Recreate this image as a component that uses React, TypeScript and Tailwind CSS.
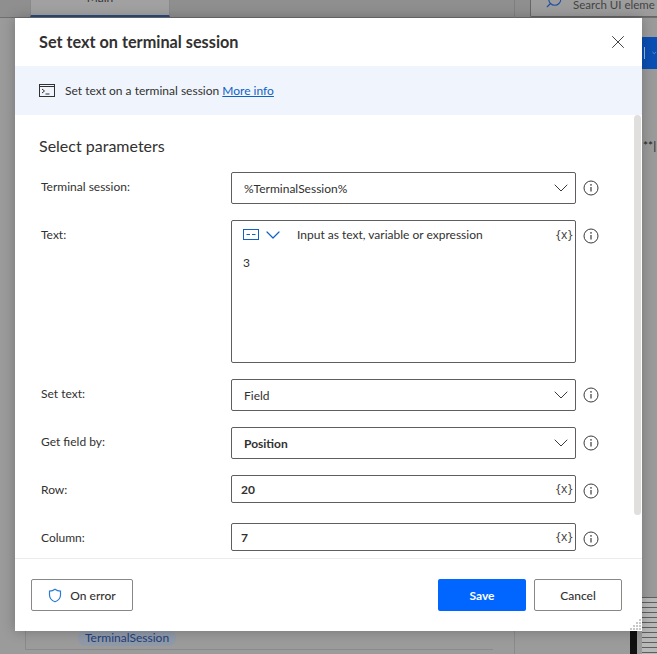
import { ChevronDown, Search, X } from 'lucide-react';

const font = "font-['Lato','Noto_Sans',sans-serif]";

function InfoIcon() {
  return (
    <svg width="16" height="16" viewBox="0 0 16 16" fill="none" className="shrink-0">
      <circle cx="8" cy="8" r="7" stroke="#3b3a39" strokeWidth="1" />
      <path d="M8 7v4.500" stroke="#3b3a39" strokeWidth="1.200" />
      <circle cx="8" cy="4.900" r="0.8" fill="#3b3a39" />
    </svg>
  );
}

function TerminalIcon() {
  return (
    <svg width="17" height="14" viewBox="0 0 17 14" fill="none" className="shrink-0">
      <rect x="0.5" y="0.5" width="15" height="12" stroke="#323130" />
      <path d="M0.5 2.500h15" stroke="#323130" />
      <path d="M3 5l2.500 2-2.500 2M6.500 10h4" stroke="#323130" />
    </svg>
  );
}

function ShieldIcon() {
  return (
    <svg width="14" height="15" viewBox="0 0 14 15" fill="none" className="shrink-0">
      <path d="M7 1.200c1.600 1.200 3.400 1.800 5.500 1.900v3.900c0 3-2 5.500-5.500 6.800C3.500 12.500 1.500 10 1.500 7V3.100C3.600 3 5.400 2.400 7 1.200z" stroke="#2b7cd3" strokeWidth="1.200" />
    </svg>
  );
}

function ModeIcon() {
  return (
    <svg width="16" height="12" viewBox="0 0 16 12" fill="none" className="shrink-0">
      <rect x="0.5" y="0.5" width="15" height="10" stroke="#0f62c4" />
      <path d="M3.500 5.500h3.500M9 5.500h3.500" stroke="#0f62c4" />
    </svg>
  );
}

function ResizeGrip() {
  const dots = [[9, 1], [6, 4], [9, 4], [3, 7], [6, 7], [9, 7], [0, 10], [3, 10], [6, 10], [9, 10]];
  return (
    <svg width="11" height="12" viewBox="0 0 11 12" className="absolute right-[1px] bottom-[1px]">
      {dots.map(([x, y]) => (
        <rect key={`${x}-${y}`} x={x} y={y} width="2" height="2" fill="#c8c8c8" />
      ))}
    </svg>
  );
}

function VarButton() {
  return <span className="font-['Noto_Sans',sans-serif] text-[12px] tracking-[0.5px] text-[#484644]">{'{x}'}</span>;
}

function Field({ children, bold, select }: { children: React.ReactNode; bold?: boolean; select?: boolean }) {
  return (
    <div className={`flex items-center justify-between w-[345px] rounded-[2px] border border-[#605e5c] ${select ? 'h-8 pl-3 pr-0.5' : 'h-7 pl-[9px] pr-0.5'}`}>
      <span className={`pt-px text-[12px] text-[#323130] ${bold ? 'font-bold' : ''}`}>{children}</span>
      {select ? <ChevronDown size={24} strokeWidth={1} color="#3b3a39" /> : <VarButton />}
    </div>
  );
}

function Row({ label, children }: { label: string; children: React.ReactNode }) {
  return (
    <div className="flex items-start min-h-8">
      <div className="w-[192px] pl-[2px] pt-1.5 text-[12px] text-[#323130]">{label}</div>
      {children}
      <div className="ml-[7px] pt-2">
        <InfoIcon />
      </div>
    </div>
  );
}

export default function App() {
  return (
    <div className={`relative w-[657px] h-[654px] overflow-hidden bg-[#9b9b9b] ${font}`}>
      {/* dimmed designer behind the dialog */}
      <div className="flex h-[18px] bg-[#8f8f8f] border-b border-[#6f6f6f]">
        <div className="ml-[30px] w-[140px] flex justify-center items-start bg-[#a1a1a1] border-b-2 border-[#2a4a80] border-x border-x-[#8a8a8a] text-[12px] leading-[12px] text-[#333]">
          <span className="-mt-[8px]">Main</span>
        </div>
        <div className="ml-auto h-[17px] w-[127px] flex items-start gap-[10px] pl-[14px] bg-[#9d9d9d] border-l border-b border-[#666] rounded-bl-[2px] text-[11.5px] leading-[10px] text-[#444] whitespace-nowrap overflow-hidden">
          <Search size={18} strokeWidth={1.500} color="#1f4fa0" className="-scale-x-100 -mt-[9px]" />
          <span>Search UI eleme</span>
        </div>
      </div>
      <div className="absolute left-[514px] top-0 w-px h-[18px] bg-[#7f7f7f]" />
      <div className="absolute right-0 top-[37px] w-[15px] h-[32px] flex items-center gap-[6px] bg-[#0a4fb3]">
        <div className="w-px h-[12px] ml-[2px] bg-[#9db8e0]" />
        <ChevronDown size={12} color="#9db8e0" />
      </div>
      <div className="absolute right-0 top-[137px] w-[14px] text-[12px] whitespace-nowrap overflow-hidden text-[#222]">**|</div>
      <div className="absolute left-[78px] top-[630px] px-[7px] rounded-full bg-[#8f99a8] text-[12px] leading-[16px] text-[#1f3f78]">TerminalSession</div>
      <div className="absolute left-[25px] top-[631px] w-[468px] h-[19px] border-l border-b border-[#8a8a8a]" />
      <div className="absolute left-[514px] top-[631px] w-px h-[23px] bg-[#8a8a8a]" />
      <div className="absolute left-[630px] top-[631px] w-[7px] h-[23px] bg-[#111]" />
      <div className="absolute right-0 top-[597px] w-[15px] h-[57px] bg-[repeating-linear-gradient(180deg,#5f5f5f_0px,#5f5f5f_1px,#b9b9b9_1px,#b9b9b9_5px)]" />

      <div className="absolute left-[15px] top-[18px] w-[627px] h-[613px] flex flex-col bg-white shadow-[0_0_12px_rgba(0,0,0,0.25)]">
        <div className="h-12 shrink-0 flex items-center justify-between pl-6 pr-[13px]">
          <h1 className="text-[16.25px] font-bold text-[#323130]">Set text on terminal session</h1>
          <X size={22} strokeWidth={1} color="#323130" />
        </div>

        <div className="h-[49px] shrink-0 flex items-center gap-[9px] pl-6 bg-[#f0f5fd] text-[12px] text-[#323130]">
          <TerminalIcon />
          <span>
            Set text on a terminal session <a className="text-[#0f62c4] underline">More info</a>
          </span>
        </div>

        <div className="relative flex-1 min-h-0 overflow-hidden pl-6 pt-[20px]">
          <h2 className="h-[37px] text-[16px] leading-[22px] text-[#323130]">Select parameters</h2>
          <div className="flex flex-col gap-4">
            <Row label="Terminal session:">
              <Field select>%TerminalSession%</Field>
            </Row>
            <Row label="Text:">
              <div className="w-[345px] h-[143px] rounded-[2px] border border-[#605e5c] pl-[11px] pr-0.5 pt-1.5 text-[12px] text-[#323130]">
                <div className="flex items-center h-4">
                  <ModeIcon />
                  <ChevronDown size={24} strokeWidth={1.200} color="#0f62c4" className="ml-[2px]" />
                  <span className="ml-3">Input as text, variable or expression</span>
                  <span className="ml-auto">
                    <VarButton />
                  </span>
                </div>
                <div className="mt-[11px]">3</div>
              </div>
            </Row>
            <Row label="Set text:">
              <Field select>Field</Field>
            </Row>
            <Row label="Get field by:">
              <Field select bold>Position</Field>
            </Row>
            <Row label="Row:">
              <Field bold>20</Field>
            </Row>
            <Row label="Column:">
              <Field bold>7</Field>
            </Row>
          </div>
          <div className="absolute right-[1px] top-0 w-[7px] h-[400px] rounded-full bg-[#e1dfdd]" />
        </div>

        <div className="relative h-[73px] shrink-0 flex items-center justify-between border-t border-[#edebe9] pl-4 pr-5">
          <button className="flex items-center justify-center gap-2 w-[102px] h-8 rounded-[2px] border border-[#8a8886] text-[12px] font-medium text-[#323130]">
            <ShieldIcon />
            <span className="pt-px">On error</span>
          </button>
          <div className="flex gap-2">
            <button className="w-[88px] h-8 pt-px rounded-[2px] bg-[#0066ff] text-[12px] font-bold text-white">Save</button>
            <button className="w-[88px] h-8 pt-px rounded-[2px] border border-[#8a8886] text-[12px] font-medium text-[#323130]">Cancel</button>
          </div>
          <ResizeGrip />
        </div>
      </div>
    </div>
  );
}
